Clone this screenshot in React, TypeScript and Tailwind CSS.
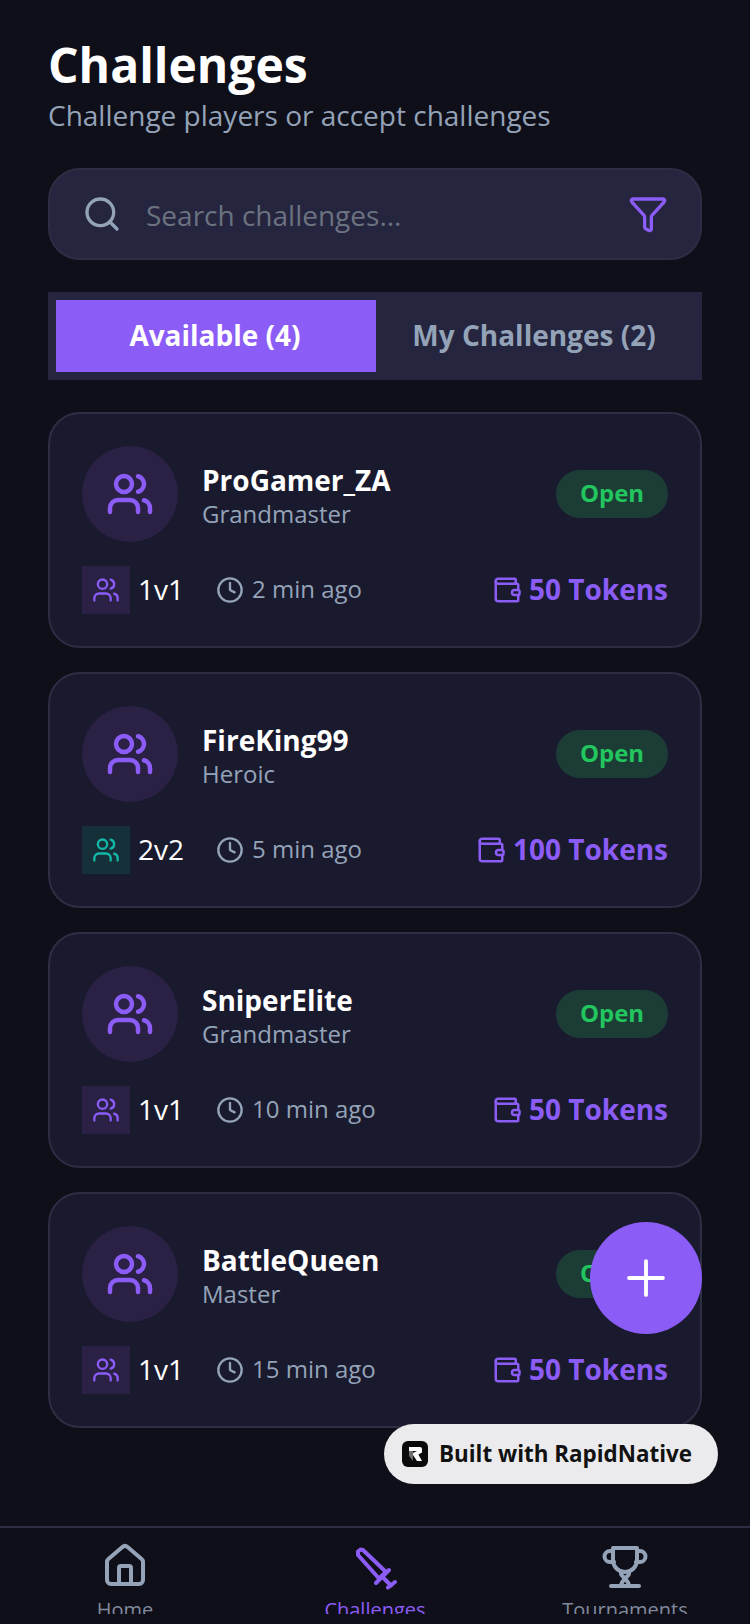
import React from "react";
import { Clock, Funnel, House, Plus, Search, Users, Wallet } from "lucide-react";

interface Challenge {
  name: string;
  rank: string;
  mode: string;
  time: string;
  tokens: number;
}

const challenges: Challenge[] = [
  { name: "ProGamer_ZA", rank: "Grandmaster", mode: "1v1", time: "2 min ago", tokens: 50 },
  { name: "FireKing99", rank: "Heroic", mode: "2v2", time: "5 min ago", tokens: 100 },
  { name: "SniperElite", rank: "Grandmaster", mode: "1v1", time: "10 min ago", tokens: 50 },
  { name: "BattleQueen", rank: "Master", mode: "1v1", time: "15 min ago", tokens: 50 },
];

const SwordIcon = () => (
  <svg viewBox="0 0 48 48" className="h-12 w-12 shrink-0 text-[#8b5cf6]" fill="none" stroke="currentColor" strokeWidth="4" strokeLinecap="round" strokeLinejoin="round">
    <path d="M7 9.5 9.5 7.5 12 8 35 30 28 36.5 7 13z" />
    <path d="M38 28 25 41" />
    <path d="M33 36.5 40 43.5" />
    <path d="M37 45.5 44 40" />
  </svg>
);

const TrophyIcon = () => (
  <svg viewBox="0 0 24 24" className="h-12 w-12 shrink-0 text-[#94a3b8]" fill="none" stroke="currentColor" strokeWidth="2" strokeLinecap="round" strokeLinejoin="round">
    <path d="M6 4.5H4.5a2.5 2.5 0 0 0 0 5.5h2" />
    <path d="M18 4.5h1.5a2.5 2.5 0 0 1 0 5.5h-2" />
    <path d="M6 3h12v6a6 6 0 0 1-12 0z" />
    <path d="M10 15v1c0 1 4 3 4 6" />
    <path d="M14 15v1c0 1-4 3-4 6" />
    <path d="M5 22h14" />
  </svg>
);

const LogoMark = () => (
  <svg viewBox="0 0 26 26" className="h-[26px] w-[26px] shrink-0">
    <rect width="26" height="26" rx="6" fill="#0a0a0a" />
    <path d="M7 6h11a2 2 0 0 1 2 2v3.5l-3.6 2L20 20h-5l-4-6v-2l4-2H7z" fill="#fff" />
    <path d="M7 10h4v10l-4-5z" fill="#6f6f6f" />
  </svg>
);

const ChallengeCard: React.FC<Challenge> = ({ name, rank, mode, time, tokens }) => {
  const isTeam = mode === "2v2";
  return (
    <div className="rounded-[32px] border-2 border-[#2d2d44] bg-[#1a1a2e] p-[32px]">
      {/* Player */}
      <div className="flex items-center justify-between">
        <div className="flex items-center gap-6">
          <div className="flex h-24 w-24 items-center justify-center rounded-full bg-[#2a2144]">
            <Users className="h-12 w-12 text-[#8b5cf6]" strokeWidth={2.25} />
          </div>
          <div className="flex flex-col pt-[3px]">
            <span className="text-[28px] leading-[36px] font-bold text-white">{name}</span>
            <span className="text-[24px] leading-[32px] text-[#94a3b8]">{rank}</span>
          </div>
        </div>
        <span className="flex h-12 w-[112px] items-center justify-center rounded-full bg-[#1c3d36] pb-[2px] text-[24px] font-bold text-[#22c55e]">
          Open
        </span>
      </div>

      {/* Details */}
      <div className="mt-6 flex items-center justify-between">
        <div className="flex items-center">
          <div className={`flex h-12 w-12 items-center justify-center ${isTeam ? "bg-[#163039]" : "bg-[#2a2144]"}`}>
            <Users className={`h-7 w-7 ${isTeam ? "text-[#14b8a6]" : "text-[#8b5cf6]"}`} strokeWidth={2} />
          </div>
          <span className="mb-[2px] ml-2 text-[28px] leading-[36px] text-white">{mode}</span>
          <Clock className="ml-8 h-7 w-7 text-[#94a3b8]" strokeWidth={2} />
          <span className="mb-[2px] ml-2 text-[24px] leading-[32px] text-[#94a3b8]">{time}</span>
        </div>
        <div className="flex items-center gap-[7px]">
          <Wallet className="h-[30px] w-[30px] text-[#8b5cf6]" strokeWidth={2} />
          <span className="mb-[2px] text-[28px] leading-[36px] font-bold text-[#8b5cf6]">{tokens} Tokens</span>
        </div>
      </div>
    </div>
  );
};

const NavItem: React.FC<{ label: string; icon: React.ReactNode; active?: boolean }> = ({ label, icon, active }) => (
  <div className="flex flex-1 flex-col items-center">
    {icon}
    <span className={`mt-[6px] shrink-0 text-[20px] leading-[28px] ${active ? "text-[#8b5cf6]" : "text-[#808a9c]"}`}>{label}</span>
  </div>
);

export default function App() {
  return (
    <div className="relative flex h-[1624px] w-[750px] flex-col overflow-hidden bg-[#0f0f1a] font-['Open_Sans',sans-serif]">
      <div className="flex-1 px-12 pt-[35px]">
        {/* Header */}
        <h1 className="text-[48px] leading-[60px] font-bold text-white">Challenges</h1>
        <p className="mt-[2px] text-[28px] leading-[36px] text-[#94a3b8]">Challenge players or accept challenges</p>

        {/* Search */}
        <div className="mt-[35px] flex h-[92px] items-center rounded-[32px] border-2 border-[#2d2d44] bg-[#25253f] px-[32px]">
          <Search className="h-10 w-10 text-[#94a3b8]" strokeWidth={2} />
          <span className="ml-6 flex-1 pt-[2px] text-[28px] leading-[36px] text-[#6b7280]">Search challenges...</span>
          <Funnel className="h-10 w-10 text-[#8b5cf6]" strokeWidth={2} />
        </div>

        {/* Tabs */}
        <div className="mt-8 flex h-[88px] bg-[#25253f] p-2">
          <div className="flex w-[320px] shrink-0 items-center justify-center bg-[#8b5cf6] pr-[2px] pb-[2px] text-[28px] font-bold text-white">
            Available (4)
          </div>
          <div className="flex flex-1 items-center justify-center pr-[2px] pb-[2px] text-[28px] font-bold text-[#94a3b8]">
            My Challenges (2)
          </div>
        </div>

        {/* List */}
        <div className="mt-8 flex flex-col gap-6">
          {challenges.map((c) => (
            <ChallengeCard key={c.name} {...c} />
          ))}
        </div>
      </div>

      {/* Bottom nav, labels are cut off by the bar */}
      <div className="flex h-[88px] shrink-0 overflow-hidden border-t-2 border-[#2d2d44] bg-[#0f0f1a] pt-[14px]">
        <NavItem label="Home" icon={<House className="h-12 w-12 shrink-0 text-[#94a3b8]" strokeWidth={2} />} />
        <NavItem label="Challenges" active icon={<SwordIcon />} />
        <NavItem label="Tournaments" icon={<TrophyIcon />} />
      </div>
      <div className="h-[10px] shrink-0" />

      {/* Floating add button */}
      <div className="absolute top-[1222px] left-[590px] flex h-28 w-28 items-center justify-center rounded-full bg-[#8b5cf6]">
        <Plus className="h-[58px] w-[58px] text-white" strokeWidth={1.6} />
      </div>

      {/* Built with badge */}
      <div className="absolute top-[1424px] left-[384px] flex h-[60px] w-[334px] items-center gap-[11px] rounded-full bg-[#ebebed] pl-[18px]">
        <LogoMark />
        <span className="text-[22.4px] font-bold text-[#111]">Built with RapidNative</span>
      </div>
    </div>
  );
}
